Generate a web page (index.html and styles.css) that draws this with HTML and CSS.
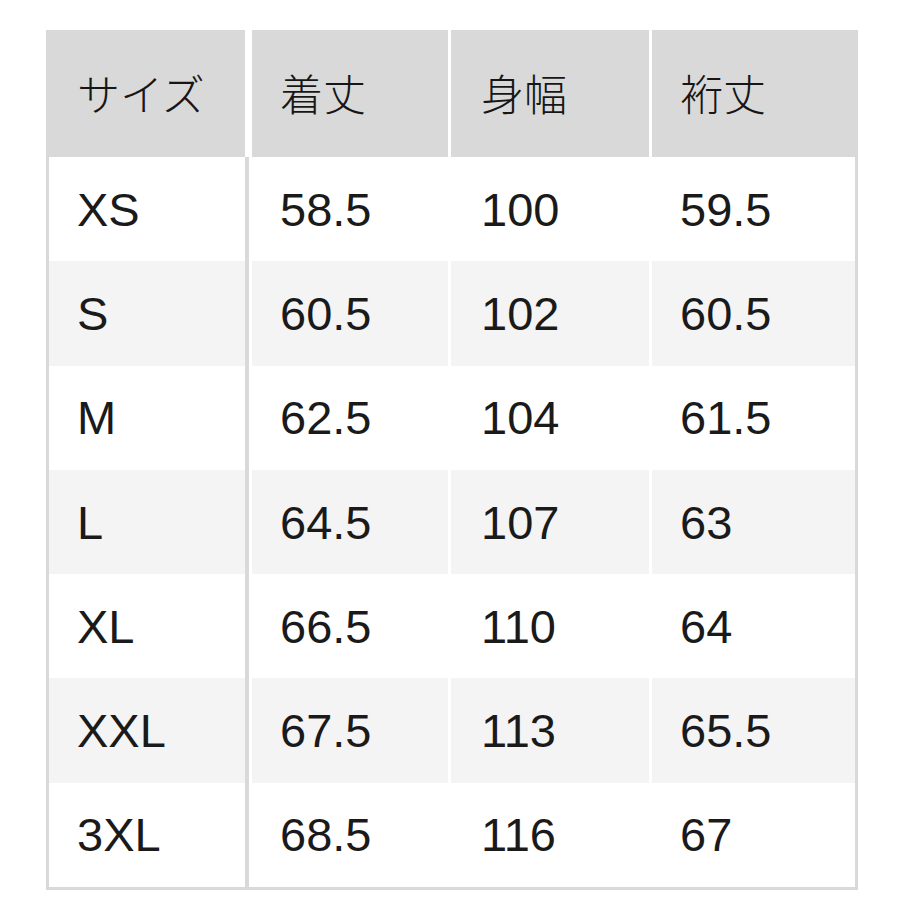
FILE: index.html
```html
<!DOCTYPE html>
<html lang="ja">
<head>
<meta charset="utf-8">
<title>サイズ表</title>
<link rel="stylesheet" href="styles.css">
</head>
<body>
<div class="page">
  <div class="size-table">
    <div class="cell head c1">サイズ</div>
    <div class="cell head c2">着丈</div>
    <div class="cell head c3">身幅</div>
    <div class="cell head c4">裄丈</div>

    <div class="cell c1">XS</div><div class="cell c2">58.5</div><div class="cell c3">100</div><div class="cell c4">59.5</div>
    <div class="cell alt c1">S</div><div class="cell alt c2">60.5</div><div class="cell alt c3">102</div><div class="cell alt c4">60.5</div>
    <div class="cell c1">M</div><div class="cell c2">62.5</div><div class="cell c3">104</div><div class="cell c4">61.5</div>
    <div class="cell alt c1">L</div><div class="cell alt c2">64.5</div><div class="cell alt c3">107</div><div class="cell alt c4">63</div>
    <div class="cell c1">XL</div><div class="cell c2">66.5</div><div class="cell c3">110</div><div class="cell c4">64</div>
    <div class="cell alt c1">XXL</div><div class="cell alt c2">67.5</div><div class="cell alt c3">113</div><div class="cell alt c4">65.5</div>
    <div class="cell c1">3XL</div><div class="cell c2">68.5</div><div class="cell c3">116</div><div class="cell c4">67</div>
  </div>
</div>
</body>
</html>
```

FILE: styles.css
```css
html, body {
  margin: 0;
  padding: 0;
  background: #ffffff;
}

.page {
  padding: 30px 0 0 46px;
}

.size-table {
  width: 812px;
  box-sizing: border-box;
  border: 3px solid #d9d9d9;
  border-top: 0;
  display: grid;
  grid-template-columns: 203px 199px 201px 203px;
  grid-template-rows: 127px repeat(7, 104.3px);
  background: #ffffff;
  font-family: "Liberation Sans", Arial, "Noto Sans CJK JP", sans-serif;
  color: #1a1a1a;
}

.cell {
  display: flex;
  align-items: center;
  box-sizing: border-box;
  padding-left: 28px;
  font-size: 47px;
  background: #ffffff;
}

.cell.alt {
  background: #f4f4f4;
}

.cell.c1 {
  border-right: 4px solid #d9d9d9;
  margin-right: 3px;
}

.cell.c2,
.cell.c3 {
  border-right: 3px solid #ffffff;
}

.cell.c3 {
  padding-left: 30px;
}

.cell.head {
  background: #d9d9d9;
  font-family: "Noto Sans CJK JP", sans-serif;
  font-size: 43px;
  font-weight: 300;
  color: #161616;
  padding-bottom: 4px;
}

.cell.head.c1 {
  border-right: 0;
  margin-right: 7px;
}
```
